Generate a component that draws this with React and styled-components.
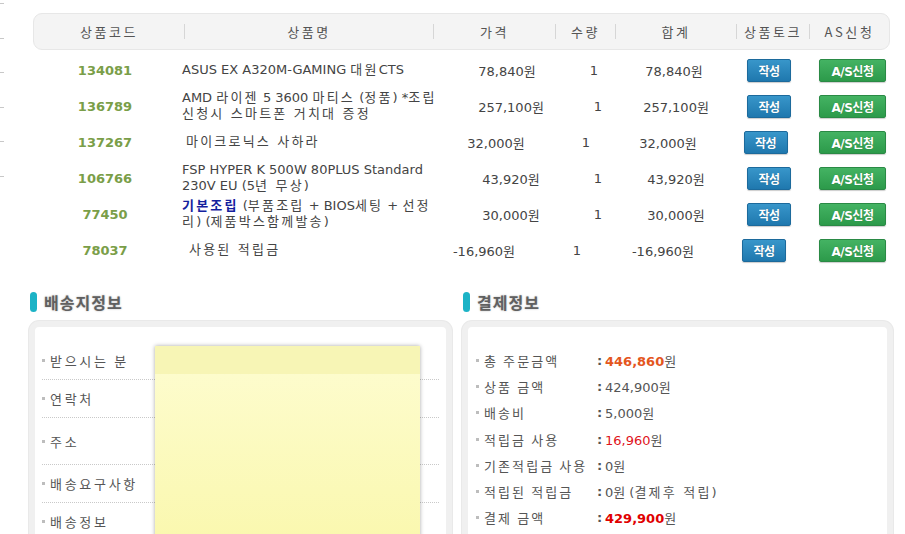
import React from "react";
import styled, { createGlobalStyle } from "styled-components";

const GlobalStyle = createGlobalStyle`
  html, body {
    margin: 0;
    padding: 0;
    background: #fff;
  }
  body {
    font-family: "DejaVu Sans", "Noto Sans CJK KR", sans-serif;
    font-size: 13px;
    color: #555;
    overflow: hidden;
  }
`;

const Page = styled.div`
  width: 905px;
  height: 534px;
  overflow: hidden;
  display: flex;
  flex-direction: column;
`;

const Top = styled.div`
  display: flex;
`;

const Edge = styled.div`
  width: 33px;
  flex: none;
  display: flex;
  flex-direction: column;
  gap: 33.5px;
  padding-top: 3px;
`;

const EdgeMark = styled.span`
  display: block;
  width: 4px;
  height: 1px;
  background: #c8c8c8;
`;

const Table = styled.div`
  width: 857px;
  flex: none;
  padding-top: 13px;
`;

const HeadBar = styled.div`
  display: grid;
  grid-template-columns: 150px 249px 122px 60px 121px 73px 80px;
  align-items: center;
  height: 37px;
  box-sizing: border-box;
  background: #f4f4f4;
  border: 1px solid #e7e7e7;
  border-radius: 9px;
`;

const HeadCell = styled.div`
  height: 15px;
  line-height: 15px;
  text-align: center;
  font-family: "Noto Sans CJK KR", "DejaVu Sans", sans-serif;
  font-size: 13px;
  letter-spacing: 2.6px;
  color: #555;
  & + & {
    border-left: 1px solid #d6d6d6;
  }
`;

const Rows = styled.div`
  margin-top: 2px;
`;

const Row = styled.div`
  display: grid;
  grid-template-columns: ${(p) => p.$cols};
  align-items: center;
  height: 36px;
`;

const Code = styled.div`
  text-align: center;
  font-weight: bold;
  font-size: 13px;
  color: #7a9e48;
`;

const Name = styled.div`
  padding-left: ${(p) => p.$indent || 5}px;
  font-size: 13px;
  line-height: 16px;
  color: #444;
  white-space: nowrap;
`;

const Ko = styled.span`
  letter-spacing: 2.2px;
`;

const Strong = styled.b`
  color: #14219e;
`;

const Num = styled.div`
  text-align: center;
  font-size: 13px;
  color: #444;
`;

const BtnCell = styled.div`
  display: flex;
  justify-content: center;
`;

const Btn = styled.button`
  width: ${(p) => (p.$green ? 67 : 44)}px;
  height: 23px;
  padding: 0;
  border-radius: 2px;
  border: 1px solid ${(p) => (p.$green ? "#2a8a45" : "#1c6a9c")};
  background: ${(p) =>
    p.$green
      ? "linear-gradient(#44b363, #2c9a4a)"
      : "linear-gradient(#3896ca, #1f78ae)"};
  box-shadow: 0 1px 1px rgba(0, 0, 0, 0.2);
  color: #fff;
  font-family: "DejaVu Sans", "Noto Sans CJK KR", sans-serif;
  font-size: 12px;
  font-weight: bold;
  letter-spacing: -0.5px;
  text-shadow: 0 0 1px rgba(0, 0, 0, 0.25);
`;

const Sections = styled.div`
  display: flex;
  gap: 10px;
  padding-left: 29px;
  margin-top: 24px;
`;

const Section = styled.section`
  width: ${(p) => p.$w}px;
  flex: none;
`;

const Title = styled.h3`
  margin: 0 0 9px;
  display: flex;
  align-items: center;
  gap: 7px;
  height: 20px;
  padding-left: 1px;
  font-family: "Noto Sans CJK KR", sans-serif;
  font-size: 16px;
  font-weight: bold;
  letter-spacing: 1px;
  color: #606060;
  text-shadow: 0 0 2px rgba(0, 0, 0, 0.3);
  &::before {
    content: "";
    width: 7px;
    height: 20px;
    border-radius: 4px;
    background: #1cb3c6;
  }
`;

const Panel = styled.div`
  position: relative;
  height: 240px;
  border: 6px solid #f0f0f0;
  border-radius: 10px;
  background: #fff;
  padding: ${(p) => p.$pad};
  box-shadow: 0 0 0 1px #e9e9e9;
`;

const Field = styled.div`
  display: flex;
  align-items: center;
  height: ${(p) => p.$h}px;
  border-bottom: 1px dotted #c9c9c9;
  box-sizing: border-box;
`;

const Label = styled.span`
  display: flex;
  align-items: center;
  gap: 5px;
  font-family: "Noto Sans CJK KR", sans-serif;
  font-size: 13px;
  letter-spacing: ${(p) => p.$ls || 2.7}px;
  color: #555;
  white-space: nowrap;
  &::before {
    content: "";
    width: 3px;
    height: 3px;
    background: #bdbdbd;
  }
`;

const Note = styled.div`
  position: absolute;
  left: 120px;
  top: 19px;
  width: 265px;
  height: 260px;
  display: flex;
  flex-direction: column;
  box-shadow: 0 0 4px rgba(0, 0, 0, 0.35);
`;

const NoteHead = styled.div`
  height: 28px;
  background: #f7f5b5;
`;

const NoteBody = styled.div`
  flex: 1;
  background: linear-gradient(#fdfccc, #f9f6a3);
`;

const PayRow = styled.div`
  display: grid;
  grid-template-columns: 121px 8px 1fr;
  align-items: center;
  height: 26.3px;
`;

const Colon = styled.span`
  font-weight: bold;
  color: #555;
`;

const Value = styled.span`
  font-size: 13px;
  color: #555;
  white-space: nowrap;
`;

const Amount = styled.span`
  color: ${(p) => p.$color};
  font-weight: ${(p) => (p.$bold ? "bold" : "normal")};
`;

// hangul runs get a little extra tracking so they take the width of the old gulim text
function Mixed({ text }) {
  return text
    .split(/([\uac00-\ud7a3]+(?: [\uac00-\ud7a3]+)*)/)
    .map((part, i) => (i % 2 ? <Ko key={i}>{part}</Ko> : part));
}

const items = [
  { code: "134081", cols: "144px 274px 112px 62px 98px 1fr 75px", name: ["ASUS EX A320M-GAMING 대원CTS"], price: "78,840원" },
  { code: "136789", cols: "144px 278px 112px 62px 94px 1fr 75px", name: ["AMD 라이젠 5 3600 마티스 (정품) *조립", "신청시 스마트폰 거치대 증정"], price: "257,100원" },
  { code: "137267", cols: "144px 263px 112px 68px 96px 1fr 75px", name: ["마이크로닉스 사하라"], price: "32,000원", indent: 9 },
  { code: "106766", cols: "144px 278px 112px 62px 94px 1fr 75px", name: ["FSP HYPER K 500W 80PLUS Standard", "230V EU (5년 무상)"], price: "43,920원" },
  { code: "77450", cols: "144px 278px 112px 62px 94px 1fr 75px", name: ["(부품조립 + BIOS세팅 + 선정", "리) (제품박스함께발송)"], strong: "기본조립", price: "30,000원" },
  { code: "78037", cols: "144px 250px 114px 72px 100px 1fr 75px", name: ["사용된 적립금"], price: "-16,960원", indent: 12 },
];

const fields = [
  { label: "받으시는 분", h: 39 },
  { label: "연락처", h: 38 },
  { label: "주소", h: 47 },
  { label: "배송요구사항", h: 38 },
  { label: "배송정보", h: 38 },
];

export default function App() {
  return (
    <Page>
      <GlobalStyle />
      <Top>
        <Edge>
          {[0, 1, 2, 3, 4, 5].map((i) => (
            <EdgeMark key={i} />
          ))}
        </Edge>
        <Table>
          <HeadBar>
            <HeadCell>상품코드</HeadCell>
            <HeadCell>상품명</HeadCell>
            <HeadCell>가격</HeadCell>
            <HeadCell>수량</HeadCell>
            <HeadCell>합계</HeadCell>
            <HeadCell>상품토크</HeadCell>
            <HeadCell>AS신청</HeadCell>
          </HeadBar>
          <Rows>
            {items.map((it) => (
              <Row key={it.code} $cols={it.cols}>
                <Code>{it.code}</Code>
                <Name $indent={it.indent}>
                  {it.strong && (
                    <Strong>
                      <Ko>{it.strong}</Ko>
                    </Strong>
                  )}
                  {it.strong && " "}
                  <Mixed text={it.name[0]} />
                  {it.name[1] && <br />}
                  {it.name[1] && <Mixed text={it.name[1]} />}
                </Name>
                <Num>{it.price}</Num>
                <Num>1</Num>
                <Num>{it.price}</Num>
                <BtnCell>
                  <Btn>작성</Btn>
                </BtnCell>
                <BtnCell>
                  <Btn $green>A/S신청</Btn>
                </BtnCell>
              </Row>
            ))}
          </Rows>
        </Table>
      </Top>
      <Sections>
        <Section $w={423}>
          <Title>배송지정보</Title>
          <Panel $pad="14px 7px 0">
            {fields.map((f) => (
              <Field key={f.label} $h={f.h}>
                <Label>{f.label}</Label>
              </Field>
            ))}
            <Note>
              <NoteHead />
              <NoteBody />
            </Note>
          </Panel>
        </Section>
        <Section $w={431}>
          <Title>결제정보</Title>
          <Panel $pad="20px 8px 0">
            <PayRow>
              <Label $ls={2.1}>총 주문금액</Label>
              <Colon>:</Colon>
              <Value>
                <Amount $color="#e4561e" $bold>446,860</Amount>원
              </Value>
            </PayRow>
            <PayRow>
              <Label $ls={2.1}>상품 금액</Label>
              <Colon>:</Colon>
              <Value>424,900원</Value>
            </PayRow>
            <PayRow>
              <Label $ls={2.1}>배송비</Label>
              <Colon>:</Colon>
              <Value>5,000원</Value>
            </PayRow>
            <PayRow>
              <Label $ls={2.1}>적립금 사용</Label>
              <Colon>:</Colon>
              <Value>
                <Amount $color="#e0141c">16,960</Amount>원
              </Value>
            </PayRow>
            <PayRow>
              <Label $ls={2.1}>기존적립금 사용</Label>
              <Colon>:</Colon>
              <Value>0원</Value>
            </PayRow>
            <PayRow>
              <Label $ls={2.1}>적립된 적립금</Label>
              <Colon>:</Colon>
              <Value>
                0원 (<Mixed text="결제후 적립" />)
              </Value>
            </PayRow>
            <PayRow>
              <Label $ls={2.1}>결제 금액</Label>
              <Colon>:</Colon>
              <Value>
                <Amount $color="#e00000" $bold>429,900</Amount>원
              </Value>
            </PayRow>
          </Panel>
        </Section>
      </Sections>
    </Page>
  );
}
